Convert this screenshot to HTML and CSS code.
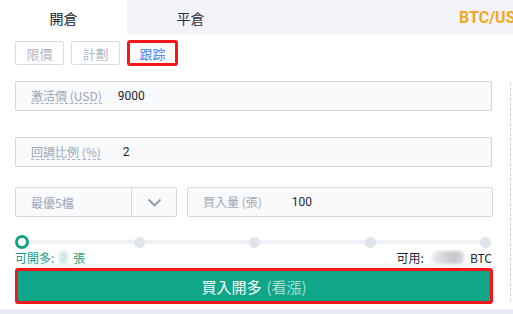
FILE: index.html
```html
<!DOCTYPE html>
<html lang="zh-Hant">
<head>
<meta charset="utf-8">
<link rel="stylesheet" href="styles.css">
</head>
<body>
<div class="page">
  <div class="tabs">
    <div class="tab active">開倉</div>
    <div class="tab">平倉</div>
    <div class="tab-rest"><span class="pair">BTC/USD</span></div>
  </div>
  <div class="main">
    <div class="form">
      <div class="types">
        <div class="type">限價</div>
        <div class="type">計劃</div>
        <div class="type selected">跟踪</div>
      </div>
      <div class="field first">
        <span class="label">激活價 (USD)</span>
        <span class="value v1">9000</span>
      </div>
      <div class="field second">
        <span class="label">回調比例 (%)</span>
        <span class="value v2">2</span>
      </div>
      <div class="row3">
        <div class="select">
          <span class="sel-text">最優5檔</span>
          <span class="sel-arrow">
            <svg width="15" height="10" viewBox="0 0 15 10"><path d="M1.5 1.5 L7.5 7.5 L13.5 1.5" fill="none" stroke="#8d97a8" stroke-width="1.8"/></svg>
          </span>
        </div>
        <div class="field qty">
          <span class="label plain">買入量 (張)</span>
          <span class="value v3">100</span>
        </div>
      </div>
      <div class="slider">
        <div class="track"></div>
        <span class="knob"></span>
        <span class="dot"></span>
        <span class="dot"></span>
        <span class="dot"></span>
        <span class="dot"></span>
      </div>
      <div class="avail">
        <span class="green">可開多:<span class="blur small"></span>張</span>
        <span class="dark">可用:<span class="blur big"></span>BTC</span>
      </div>
      <div class="buy-wrap">
        <div class="buy">買入開多 <span class="sub">(看漲)</span></div>
      </div>
    </div>
    <div class="divider"></div>
  </div>
  <div class="bottom"></div>
</div>
</body>
</html>
```
FILE: styles.css
```css
html, body {
  margin: 0;
  padding: 0;
  background: #fff;
}
body {
  width: 513px;
  height: 314px;
  overflow: hidden;
  font-family: "Noto Sans CJK TC", "Noto Sans", Roboto, sans-serif;
}
.page {
  width: 513px;
  height: 314px;
  display: flex;
  flex-direction: column;
}
.tabs {
  display: flex;
  height: 35px;
  flex: none;
}
.tab {
  width: 127px;
  display: flex;
  align-items: center;
  justify-content: center;
  font-size: 14px;
  color: #2a3142;
  background: #f2f4f9;
}
.tab.active {
  background: #fff;
  color: #1d2230;
}
.tab-rest {
  flex: 1;
  background: #f2f4f9;
  display: flex;
  align-items: center;
  padding-left: 205px;
  white-space: nowrap;
  overflow: hidden;
}
.pair {
  font-family: Roboto, "Noto Sans", sans-serif;
  font-weight: 700;
  font-size: 16px;
  color: #f5a623;
}
.main {
  display: flex;
  flex: 1;
}
.form {
  margin-left: 15px;
  width: 478px;
  display: flex;
  flex-direction: column;
}
.types {
  display: flex;
  gap: 7px;
  margin-top: 6px;
}
.type {
  width: 47px;
  height: 22px;
  border: 1px solid #d8dce4;
  border-radius: 2px;
  display: flex;
  align-items: center;
  justify-content: center;
  font-size: 13px;
  color: #b0b7c5;
}
.type.selected {
  width: 45px;
  height: 20px;
  border: 3px solid #f4171a;
  border-radius: 3px;
  margin-top: -1px;
  color: #3d7cf0;
}
.field {
  box-sizing: border-box;
  height: 30px;
  border: 1px solid #d3d8e1;
  border-radius: 2px;
  background: #f9fafc;
  display: flex;
  align-items: center;
  font-size: 12px;
  position: relative;
  width: 477px;
}
.field.first { margin-top: 15px; }
.field.second { margin-top: 26px; }
.label {
  margin-left: 15px;
  color: #9ba6ba;
  border-bottom: 1px dashed #a7b0c2;
  line-height: 14px;
}
.label.plain {
  border-bottom: none;
}
.value {
  color: #1d2435;
  font-family: Roboto, "Noto Sans", sans-serif;
  font-size: 12px;
}
.v1 { margin-left: 16px; }
.v2 { margin-left: 22px; }
.v3 { margin-left: 30px; }
.row3 {
  display: flex;
  margin-top: 20px;
  gap: 10px;
}
.select {
  box-sizing: border-box;
  width: 162px;
  height: 30px;
  border: 1px solid #d3d8e1;
  border-radius: 2px;
  background: #f9fafc;
  display: flex;
  align-items: center;
}
.sel-text {
  width: 116px;
  padding-left: 15px;
  box-sizing: border-box;
  font-size: 12px;
  color: #9ba6ba;
  height: 100%;
  display: flex;
  align-items: center;
  border-right: 1px solid #d3d8e1;
}
.sel-arrow {
  flex: 1;
  display: flex;
  justify-content: center;
  align-items: center;
  padding-top: 1px;
}
.field.qty {
  width: 306px;
}
.slider {
  margin-top: 18px;
  height: 14px;
  position: relative;
  display: flex;
  justify-content: space-between;
  align-items: center;
  width: 477px;
  padding-right: 1px;
  box-sizing: border-box;
}
.track {
  position: absolute;
  left: 6px;
  right: 6px;
  top: 5px;
  height: 4px;
  background: #eef1f6;
  border-radius: 2px;
}
.knob {
  position: relative;
  box-sizing: border-box;
  width: 14px;
  height: 14px;
  border: 3px solid #11a187;
  border-radius: 50%;
  background: #fff;
}
.dot {
  position: relative;
  width: 11px;
  height: 11px;
  border-radius: 50%;
  background: #e0e4ec;
}
.avail {
  display: flex;
  justify-content: space-between;
  align-items: center;
  height: 16px;
  font-size: 12px;
  width: 477px;
}
.green {
  color: #14a088;
  display: flex;
  align-items: center;
}
.dark {
  color: #1d2435;
  display: flex;
  align-items: center;
}
.blur {
  display: inline-block;
  height: 13px;
  border-radius: 4px;
  filter: blur(1.5px);
}
.blur.small {
  width: 9px;
  margin: 0 5px 0 5px;
  background: #d3e9e4;
}
.blur.big {
  width: 32px;
  margin: 0 6px 0 8px;
  background: linear-gradient(90deg, #eceef1 0%, #d3d4d8 40%, #c6c7cb 70%, #dcdde0 100%);
}
.buy-wrap {
  margin-top: 3px;
  box-sizing: border-box;
  width: 478px;
  height: 36px;
  border: 3px solid #f4171a;
  border-radius: 3px;
  background: #10a689;
  display: flex;
}
.buy {
  flex: 1;
  display: flex;
  align-items: center;
  justify-content: center;
  color: #fff;
  font-size: 15px;
  font-weight: 400;
}
.buy .sub {
  color: #a9ddd1;
  margin-left: 5px;
}
.divider {
  margin-left: 17px;
  margin-top: 48px;
  height: 218px;
  border-left: 1px dashed #ccd1db;
}
.bottom {
  height: 5px;
  background: #e8ebf3;
  flex: none;
}
```
